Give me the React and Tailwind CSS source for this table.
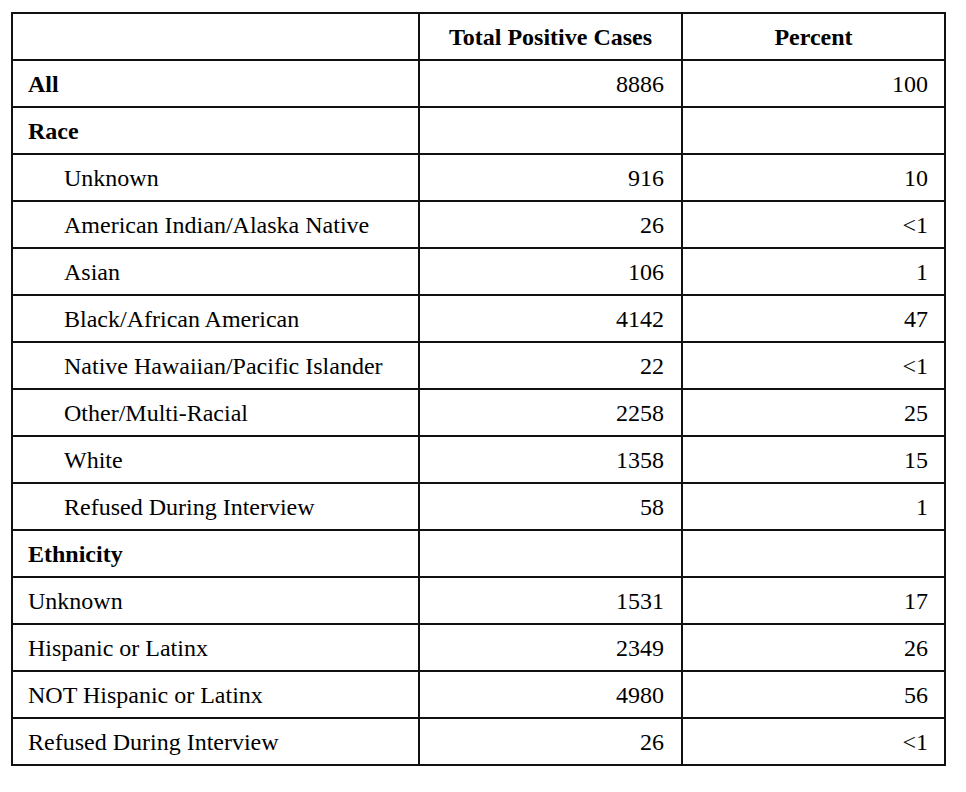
import React from 'react';

const rows = [
  { label: 'All', total: '8886', pct: '100', bold: true },
  { label: 'Race', total: '', pct: '', bold: true },
  { label: 'Unknown', total: '916', pct: '10', indent: true },
  { label: 'American Indian/Alaska Native', total: '26', pct: '<1', indent: true },
  { label: 'Asian', total: '106', pct: '1', indent: true },
  { label: 'Black/African American', total: '4142', pct: '47', indent: true },
  { label: 'Native Hawaiian/Pacific Islander', total: '22', pct: '<1', indent: true },
  { label: 'Other/Multi-Racial', total: '2258', pct: '25', indent: true },
  { label: 'White', total: '1358', pct: '15', indent: true },
  { label: 'Refused During Interview', total: '58', pct: '1', indent: true },
  { label: 'Ethnicity', total: '', pct: '', bold: true },
  { label: 'Unknown', total: '1531', pct: '17' },
  { label: 'Hispanic or Latinx', total: '2349', pct: '26' },
  { label: 'NOT Hispanic or Latinx', total: '4980', pct: '56' },
  { label: 'Refused During Interview', total: '26', pct: '<1' },
];

const cell = 'h-[47px] border-r-2 border-b-2 border-[#111] flex items-center';

export default function App() {
  return (
    <div className="bg-white min-h-screen pt-[12px] pl-[11px] text-black text-[24px] leading-none font-['Liberation_Serif',serif]">
      <div className="grid grid-cols-[407px_263px_263px] w-[935px] border-l-2 border-t-2 border-[#111]">
        {/* header */}
        <div className={cell}></div>
        <div className={`${cell} justify-center font-bold`}>Total Positive Cases</div>
        <div className={`${cell} justify-center font-bold`}>Percent</div>

        {rows.map((r, i) => (
          <React.Fragment key={i}>
            <div className={`${cell} ${r.indent ? 'pl-[51px]' : 'pl-[15px]'} ${r.bold ? 'font-bold' : ''}`}>
              {r.label}
            </div>
            <div className={`${cell} justify-end pr-[17px]`}>{r.total}</div>
            <div className={`${cell} justify-end pr-[16px]`}>{r.pct}</div>
          </React.Fragment>
        ))}
      </div>
    </div>
  );
}
